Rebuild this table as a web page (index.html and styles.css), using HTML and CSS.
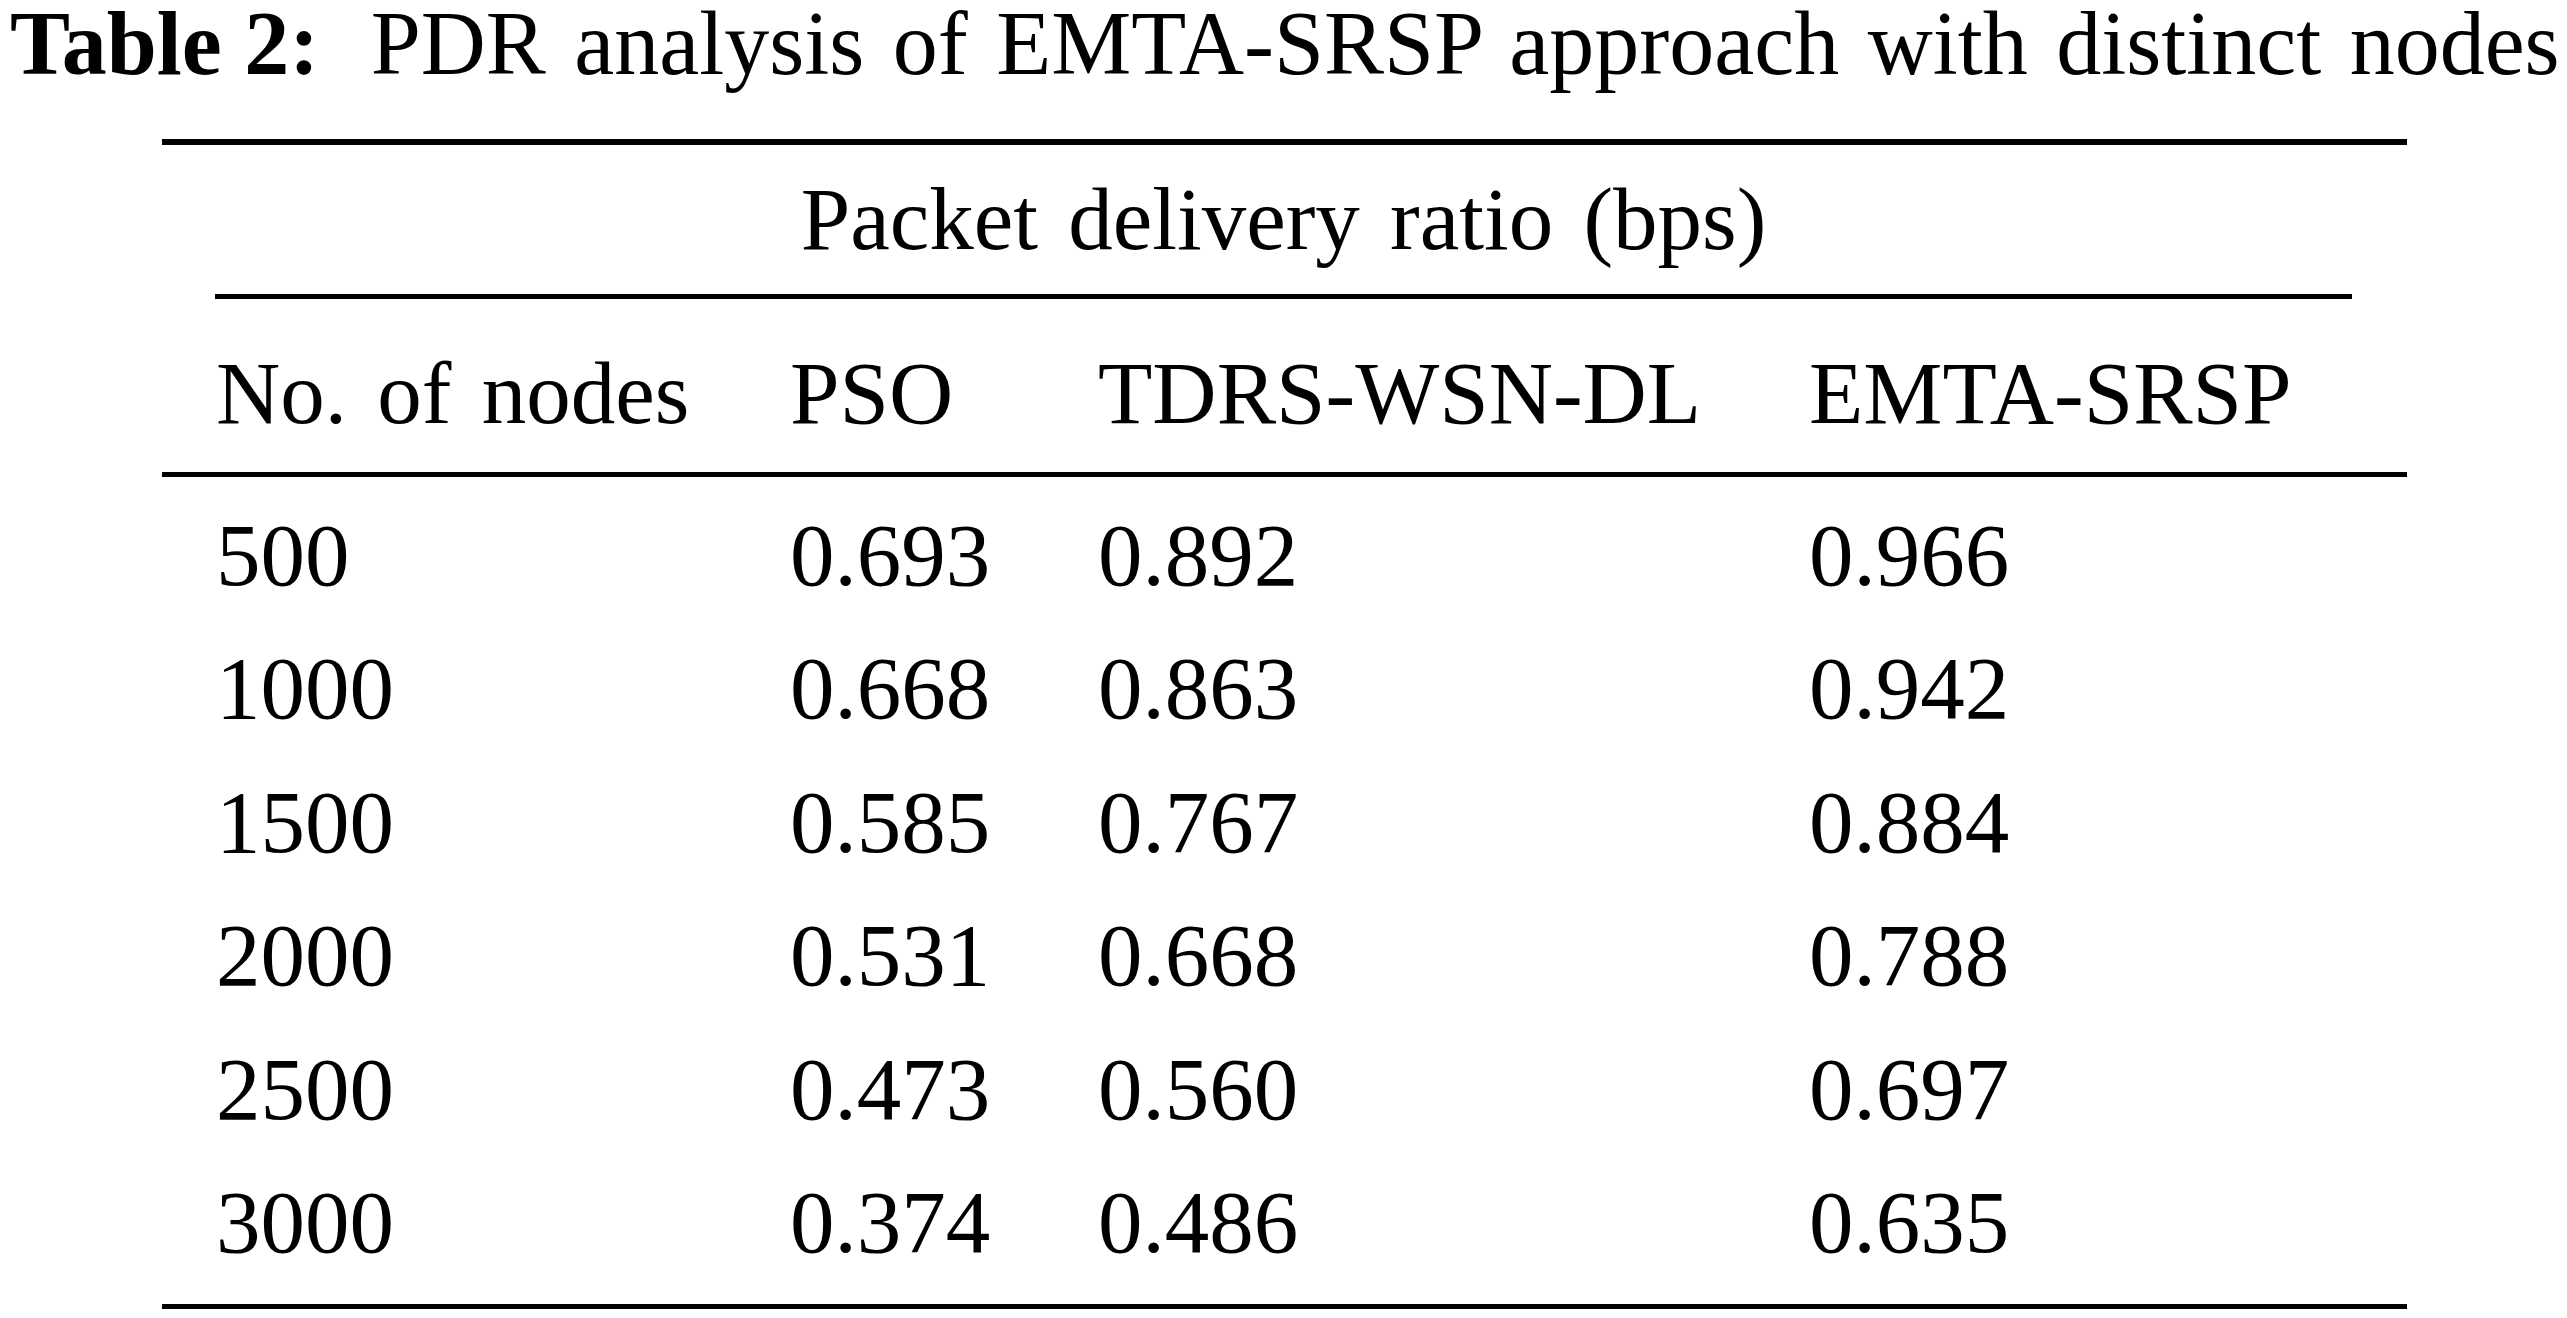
FILE: index.html
```html
<!DOCTYPE html>
<html lang="en">
<head>
<meta charset="utf-8">
<title>Table 2: PDR analysis of EMTA-SRSP approach with distinct nodes</title>
<link rel="stylesheet" href="styles.css">
</head>
<body>
<div class="page">
  <p class="caption"><b class="caption-label">Table 2:</b> <span class="caption-text">PDR analysis of EMTA-SRSP approach with distinct nodes</span></p>
  <table class="data-table">
    <colgroup>
      <col class="c1">
      <col class="c2">
      <col class="c3">
      <col class="c4">
    </colgroup>
    <thead>
      <tr class="group-row">
        <th colspan="4" class="group-cell"><div class="group-label">Packet delivery ratio (bps)</div></th>
      </tr>
      <tr class="head-row">
        <th class="first">No. of nodes</th>
        <th>PSO</th>
        <th>TDRS-WSN-DL</th>
        <th>EMTA-SRSP</th>
      </tr>
    </thead>
    <tbody>
      <tr><td class="first">500</td><td>0.693</td><td>0.892</td><td>0.966</td></tr>
      <tr><td class="first">1000</td><td>0.668</td><td>0.863</td><td>0.942</td></tr>
      <tr><td class="first">1500</td><td>0.585</td><td>0.767</td><td>0.884</td></tr>
      <tr><td class="first">2000</td><td>0.531</td><td>0.668</td><td>0.788</td></tr>
      <tr><td class="first">2500</td><td>0.473</td><td>0.560</td><td>0.697</td></tr>
      <tr><td class="first">3000</td><td>0.374</td><td>0.486</td><td>0.635</td></tr>
    </tbody>
  </table>
</div>
</body>
</html>
```
FILE: styles.css
```css
html, body {
  margin: 0;
  padding: 0;
  background: #ffffff;
}

body {
  font-family: "Liberation Serif", "Times New Roman", serif;
  color: #000000;
}

.page {
  width: 2567px;
  height: 1318px;
  overflow: hidden;
}

.caption {
  margin: 0;
  padding-left: 10px;
  font-size: 90px;
  line-height: 88px;
  white-space: nowrap;
}

.caption-label {
  font-weight: bold;
}

.caption-text {
  margin-left: 29px;
  word-spacing: 6px;
}

.data-table {
  margin-top: 51px;
  margin-left: 162px;
  width: 2245px;
  table-layout: fixed;
  border-collapse: collapse;
  font-size: 89px;
  word-spacing: 8px;
  border-top: 6px solid #000;
  border-bottom: 5px solid #000;
}

.c1 { width: 628px; }
.c2 { width: 308px; }
.c3 { width: 711px; }
.c4 { width: 598px; }

.data-table th,
.data-table td {
  font-weight: normal;
  text-align: left;
  padding: 0;
  white-space: nowrap;
  line-height: 98.5px;
}

.data-table .first {
  padding-left: 54px;
}

.data-table .group-cell {
  padding: 0 55px 0 53px;
}

.data-table .group-label {
  text-align: center;
  padding: 25px 0;
  border-bottom: 5px solid #000;
}

.data-table .head-row th {
  padding-top: 45px;
  padding-bottom: 30px;
  border-bottom: 5px solid #000;
}

.data-table td {
  padding-top: 17.5px;
  padding-bottom: 17.5px;
}

.data-table tbody tr:first-child td {
  padding-top: 28.5px;
}

.data-table tbody tr:last-child td {
  padding-bottom: 32px;
}
```
